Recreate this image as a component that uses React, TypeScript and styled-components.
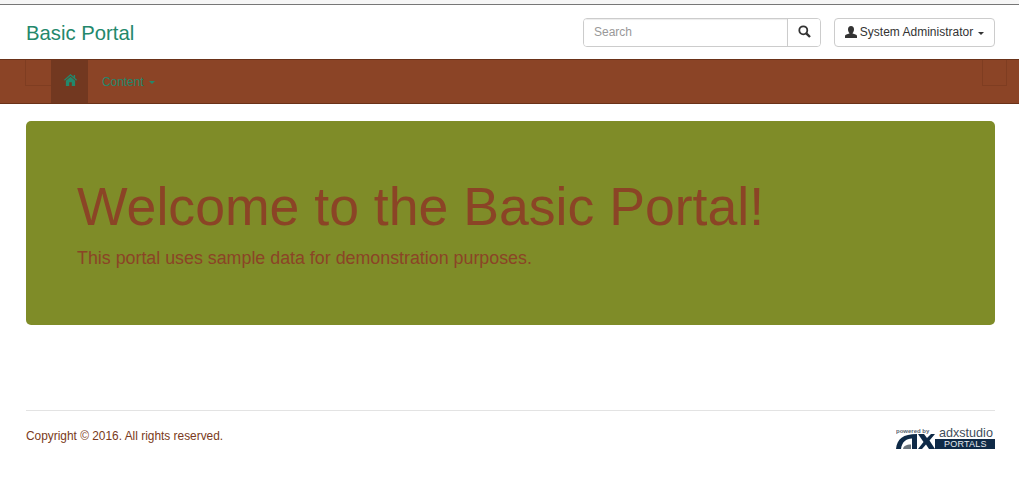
import React from 'react';
import styled, { createGlobalStyle } from 'styled-components';

const GlobalStyle = createGlobalStyle`
  html, body {
    margin: 0;
    padding: 0;
    background: #fff;
    font-family: "Liberation Sans", Arial, sans-serif;
  }
`;

const Page = styled.div`
  min-height: 490px;
  display: flex;
  flex-direction: column;
`;

const TopStrip = styled.div`
  height: 4px;
  background: #f6f6f6;
  border-bottom: 1px solid #777;
`;

/* Header */
const Header = styled.header`
  height: 54px;
  padding: 0 24px 0 26px;
  display: flex;
  align-items: center;
  justify-content: space-between;
`;

const Brand = styled.a`
  padding-top: 2px;
  font-size: 20.3px;
  line-height: 28px;
  color: #23886b;
`;

const HeaderTools = styled.div`
  display: flex;
  align-items: center;
  gap: 13px;
`;

const SearchGroup = styled.div`
  display: flex;
  height: 29px;
  width: 238px;
  box-sizing: border-box;
  border: 1px solid #ccc;
  border-radius: 4px;
  overflow: hidden;
`;

const SearchInput = styled.input`
  flex: 1;
  min-width: 0;
  border: 0;
  outline: 0;
  padding: 0 10px;
  font: 12px "Liberation Sans", Arial, sans-serif;
  color: #555;
  box-shadow: inset 0 1px 1px rgba(0, 0, 0, 0.075);

  &::placeholder {
    color: #999;
    opacity: 1;
  }
`;

const SearchButton = styled.button`
  width: 33px;
  padding: 0 0 2px;
  border: 0;
  border-left: 1px solid #ccc;
  background: #fff;
  color: #333;
  display: flex;
  align-items: center;
  justify-content: center;
`;

const UserButton = styled.button`
  height: 29px;
  width: 161px;
  box-sizing: border-box;
  padding: 0;
  border: 1px solid #ccc;
  border-radius: 4px;
  background: #fff;
  color: #333;
  font: 12px "Liberation Sans", Arial, sans-serif;
  display: flex;
  align-items: center;
  justify-content: center;
  gap: 3px;
`;

const Caret = styled.span<{ $color: string }>`
  display: inline-block;
  width: 0;
  height: 0;
  margin-left: 2px;
  margin-top: 2px;
  border-top: 3px solid ${(p) => p.$color};
  border-left: 3px solid transparent;
  border-right: 3px solid transparent;
`;

/* Nav */
const NavBar = styled.nav`
  position: relative;
  height: 45px;
  box-sizing: border-box;
  padding-left: 51px;
  background: #8b4426;
  border-top: 1px solid #6a3219;
  border-bottom: 1px solid #6a3219;
  display: flex;
`;

const GhostBox = styled.span<{ $side: 'left' | 'right' }>`
  position: absolute;
  top: 0;
  ${(p) => (p.$side === 'left' ? 'left: 25px; width: 26px;' : 'right: 12px; width: 25px;')}
  height: 26px;
  box-sizing: border-box;
  border: 1px solid #7f3d21;
  ${(p) => (p.$side === 'left' ? 'border-right: 0;' : '')}
  border-top: 0;
`;

const NavItem = styled.a`
  height: 43px;
  box-sizing: border-box;
  padding: 0 14px;
  display: flex;
  align-items: center;
  gap: 3px;
  font-size: 11.9px;
  color: #23886b;
`;

const HomeItem = styled(NavItem)`
  padding: 0 11px 3px 13px;
  background: #723820;
`;

/* Hero */
const Main = styled.main`
  padding: 17px 24px 0 26px;
`;

const Hero = styled.section`
  height: 204px;
  box-sizing: border-box;
  padding: 51px 51px 0;
  background: #7f8c28;
  border-radius: 5px;
  color: #8b4426;
`;

const HeroTitle = styled.h1`
  margin: 0;
  font-size: 53.6px;
  line-height: 68px;
  font-weight: 400;
`;

const HeroLead = styled.p`
  margin: 5px 0 0;
  font-size: 17.83px;
  line-height: 26px;
`;

/* Footer */
const Footer = styled.footer`
  margin: 85px 24px 0 26px;
  height: 49px;
  border-top: 1px solid #e3e3e3;
  display: flex;
  align-items: center;
  justify-content: space-between;
`;

const Copyright = styled.span`
  font-size: 11.9px;
  color: #7a3a20;
`;

const LogoSvg = styled.svg`
  margin-top: 4px;
  flex-shrink: 0;
`;

const Logo = () => (
  <LogoSvg width="99" height="27" viewBox="0 -4 99 27" aria-label="powered by adxstudio Portals">
    <text x="0" y="4.5" fontSize="6" fontWeight="700" fill="#5b6670" fontFamily="Liberation Sans, sans-serif">
      powered by
    </text>
    <path d="M0 21 C1 11 7 6 21 6 L21 21 L16 21 L16 10.5 C10 10.5 6 14 5 21 Z" fill="#0f2a47" />
    <path d="M7 21 C7.5 18 10 16.5 15 16.5 L15 21 Z" fill="#6c757c" />
    <path d="M22 6 L28 6 L31 10 L35 6 L39 6 L33.5 12.5 L39 21 L33 21 L30 16.5 L26 21 L22 21 L27.5 14 Z" fill="#0f2a47" />
    <text x="43" y="8.8" fontSize="12.6" fill="#3f4d5b" fontFamily="Liberation Sans, sans-serif">
      adxstudio
    </text>
    <rect x="39" y="11" width="60" height="10" fill="#0f2a47" />
    <text x="48" y="19.2" fontSize="9" letterSpacing="0.2" fill="#e6ebf0" fontFamily="Liberation Sans, sans-serif">
      PORTALS
    </text>
  </LogoSvg>
);

const HomeIcon = () => (
  <svg width="13" height="12" viewBox="0 0 14 13" fill="currentColor">
    <path d="M7 0 L10.5 3 V1 H12 V4.3 L14 6.3 L13.2 7.2 L7 1.8 L0.8 7.2 L0 6.3 Z" />
    <path d="M2 7.4 L7 3.1 L12 7.4 V13 H8.4 V9 H5.6 V13 H2 Z" />
  </svg>
);

const SearchIcon = () => (
  <svg width="13" height="13" viewBox="0 0 13 13" fill="none" stroke="currentColor">
    <circle cx="5.3" cy="5.3" r="4" strokeWidth="1.8" />
    <path d="M8.3 8.3 L12 12" strokeWidth="2.4" />
  </svg>
);

const UserIcon = () => (
  <svg width="12" height="12" viewBox="0 0 12 12" fill="currentColor">
    <path d="M6 0 C8 0 9 1.5 9 3.4 C9 5 8.3 6.2 7.6 6.9 V7.6 C9.5 8.3 12 8.8 12 10 V12 H0 V10 C0 8.8 2.5 8.3 4.4 7.6 V6.9 C3.7 6.2 3 5 3 3.4 C3 1.5 4 0 6 0 Z" />
  </svg>
);

export default function App() {
  return (
    <Page>
      <GlobalStyle />
      <TopStrip />
      <Header>
        <Brand>Basic Portal</Brand>
        <HeaderTools>
          <SearchGroup>
            <SearchInput placeholder="Search" />
            <SearchButton>
              <SearchIcon />
            </SearchButton>
          </SearchGroup>
          <UserButton>
            <UserIcon />
            System Administrator
            <Caret $color="#333" />
          </UserButton>
        </HeaderTools>
      </Header>
      <NavBar>
        <GhostBox $side="left" />
        <GhostBox $side="right" />
        <HomeItem>
          <HomeIcon />
        </HomeItem>
        <NavItem>
          Content
          <Caret $color="#23886b" />
        </NavItem>
      </NavBar>
      <Main>
        <Hero>
          <HeroTitle>Welcome to the Basic Portal!</HeroTitle>
          <HeroLead>This portal uses sample data for demonstration purposes.</HeroLead>
        </Hero>
      </Main>
      <Footer>
        <Copyright>Copyright © 2016. All rights reserved.</Copyright>
        <Logo />
      </Footer>
    </Page>
  );
}
